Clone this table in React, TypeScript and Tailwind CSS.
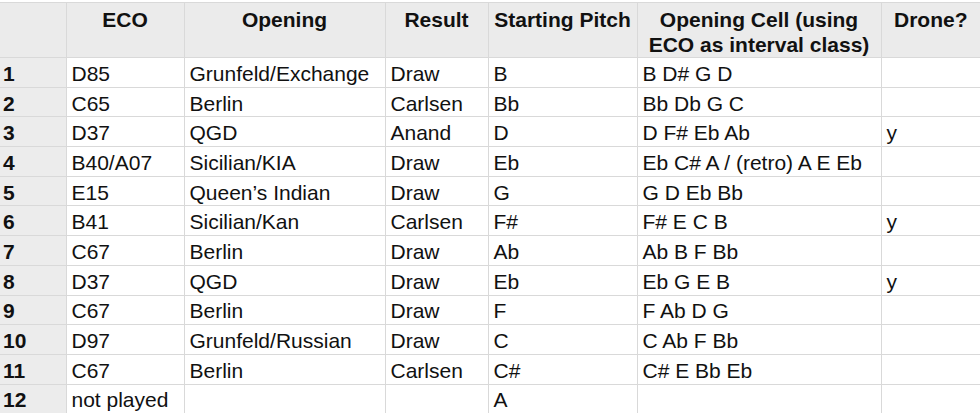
import React from "react";

const rows = [
  ["D85", "Grunfeld/Exchange", "Draw", "B", "B D# G D", ""],
  ["C65", "Berlin", "Carlsen", "Bb", "Bb Db G C", ""],
  ["D37", "QGD", "Anand", "D", "D F# Eb Ab", "y"],
  ["B40/A07", "Sicilian/KIA", "Draw", "Eb", "Eb C# A / (retro) A E Eb", ""],
  ["E15", "Queen\u2019s Indian", "Draw", "G", "G D Eb Bb", ""],
  ["B41", "Sicilian/Kan", "Carlsen", "F#", "F# E C B", "y"],
  ["C67", "Berlin", "Draw", "Ab", "Ab B F Bb", ""],
  ["D37", "QGD", "Draw", "Eb", "Eb G E B", "y"],
  ["C67", "Berlin", "Draw", "F", "F Ab D G", ""],
  ["D97", "Grunfeld/Russian", "Draw", "C", "C Ab F Bb", ""],
  ["C67", "Berlin", "Carlsen", "C#", "C# E Bb Eb", ""],
  ["not played", "", "", "A", "", ""],
];

const widths = [66, 118, 201, 103, 149, 244, 99];

const App = () => {
  return (
    <div
      className="w-[980px] h-[413px] overflow-hidden bg-white pt-[2px] text-[21px] text-[#111]"
      style={{ fontFamily: '"Liberation Sans", Arial, sans-serif' }}
    >
      <table className="table-fixed border-collapse w-[980px]">
        <colgroup>
          {widths.map((w, i) => (
            <col key={i} style={{ width: w }} />
          ))}
        </colgroup>
        <thead>
          <tr className="h-[55px] bg-[#ebebeb] font-bold">
            <th className="border-t border-b border-r border-[#d9d9d9]"></th>
            <th className="border border-[#d9d9d9] align-top text-center pt-[4px] leading-[25px]">ECO</th>
            <th className="border border-[#d9d9d9] align-top text-center pt-[4px] leading-[25px]">Opening</th>
            <th className="border border-[#d9d9d9] align-top text-center pt-[4px] leading-[25px]">Result</th>
            <th className="border border-[#d9d9d9] align-top text-center pt-[4px] leading-[25px] whitespace-nowrap">Starting Pitch</th>
            <th className="border border-[#d9d9d9] align-top text-center pt-[4px] leading-[25px] whitespace-nowrap">
              Opening Cell (using
              <br />
              ECO as interval class)
            </th>
            <th className="border-t border-b border-l border-[#d9d9d9] align-top text-center pt-[4px] leading-[25px]">Drone?</th>
          </tr>
        </thead>
        <tbody>
          {rows.map((r, i) => (
            <tr key={i} className="h-[29.7px]">
              <td className="bg-[#ececec] border-b border-r border-[#d9d9d9] font-bold pl-[3px] pt-[2px] leading-none">
                {i + 1}
              </td>
              {r.map((c, j) => (
                <td
                  key={j}
                  className={`border-b border-[#d9d9d9] pl-[5px] pt-[2px] whitespace-nowrap leading-none ${
                    j < 5 ? "border-r" : ""
                  }`}
                >
                  {c}
                </td>
              ))}
            </tr>
          ))}
        </tbody>
      </table>
    </div>
  );
};

export default App;
